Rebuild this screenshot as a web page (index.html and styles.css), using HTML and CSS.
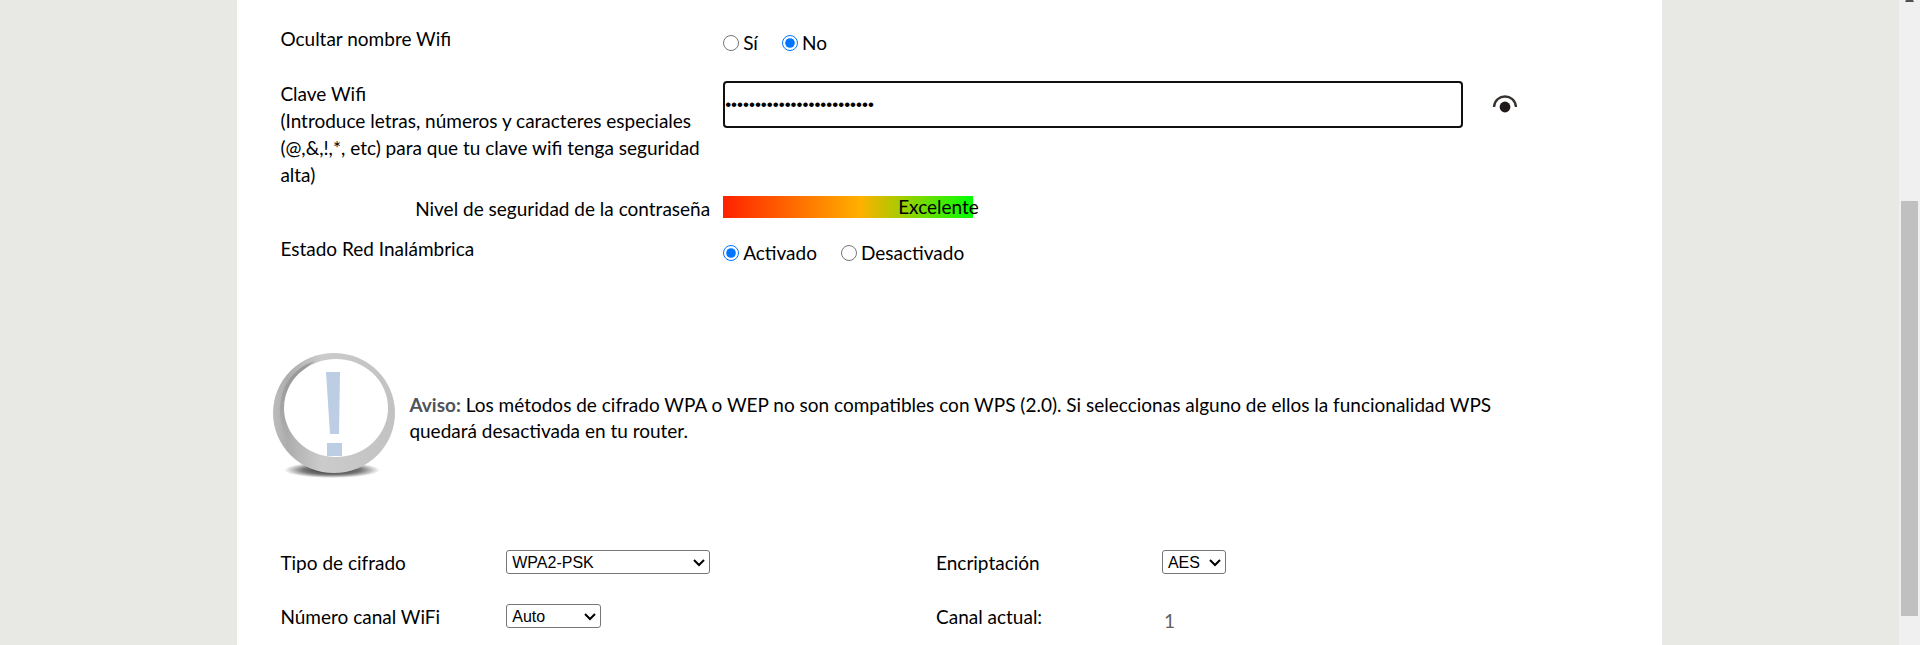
FILE: index.html
```
<!DOCTYPE html>
<html lang="es">
<head>
  <meta charset="utf-8">
  <title>Configuración WiFi</title>
  <link rel="stylesheet" href="styles.css">
</head>
<body>
  <main class="page">
    <form class="panel">
      <div class="row row-hide">
        <span class="label" id="hideLabel">Ocultar nombre Wifi</span>
        <div class="radios" role="radiogroup" aria-labelledby="hideLabel">
          <label><input type="radio" name="hide" value="1">Sí</label>
          <label><input type="radio" name="hide" value="0" checked>No</label>
        </div>
      </div>

      <div class="row row-key">
        <label class="label" for="wifiKey">Clave Wifi<br>(Introduce letras, números y caracteres especiales (@,&amp;,!,*, etc) para que tu clave wifi tenga seguridad alta)</label>
        <input class="key" type="password" id="wifiKey" value="ClaveWifiSegura2024Router">
        <button class="eye" type="button" aria-label="Mostrar clave">
          <svg width="26" height="20" viewBox="0 0 26 20">
            <path d="M2 13C3 -1 23 -1 24 13" fill="none" stroke="#3a3230" stroke-width="2.4"/>
            <circle cx="13" cy="13" r="5.4" fill="#1f1a19"/>
          </svg>
        </button>
      </div>

      <div class="row row-level">
        <span class="label right">Nivel de seguridad de la contraseña</span>
        <div class="strength"><span>Excelente</span></div>
      </div>

      <div class="row row-state">
        <span class="label" id="stateLabel">Estado Red Inalámbrica</span>
        <div class="radios" role="radiogroup" aria-labelledby="stateLabel">
          <label><input type="radio" name="state" value="1" checked>Activado</label>
          <label><input type="radio" name="state" value="0">Desactivado</label>
        </div>
      </div>

      <div class="notice">
        <svg class="notice-icon" width="130" height="130" viewBox="0 0 130 130">
          <defs>
            <linearGradient id="ring" x1="0" y1="0" x2="1" y2="0">
              <stop offset="0" stop-color="#bcbcbc"/>
              <stop offset="0.12" stop-color="#adadad"/>
              <stop offset="0.4" stop-color="#cbcbcb"/>
              <stop offset="1" stop-color="#c2c2c2"/>
            </linearGradient>
            <linearGradient id="inner" x1="0" y1="0" x2="0" y2="1">
              <stop offset="0" stop-color="#808080"/>
              <stop offset="1" stop-color="#b5b5b5"/>
            </linearGradient>
            <radialGradient id="shadow">
              <stop offset="0" stop-color="#222"/>
              <stop offset="0.6" stop-color="#777"/>
              <stop offset="1" stop-color="#fff"/>
            </radialGradient>
          </defs>
          <ellipse cx="65" cy="119" rx="48" ry="8" fill="url(#shadow)"/>
          <ellipse cx="67" cy="62" rx="61" ry="60" fill="url(#ring)"/>
          <path d="M48 10C25 17 12 38 13 62C14 78 20 92 31 102C22 88 18 72 20 56C23 36 32 20 48 10Z" fill="url(#inner)" opacity="0.6"/>
          <ellipse cx="69" cy="57" rx="52" ry="49" fill="#fff"/>
          <path d="M59 21H73L72 83H63ZM60 92H75V105H60Z" fill="#bccde4"/>
        </svg>
        <p><strong>Aviso:</strong> Los métodos de cifrado WPA o WEP no son compatibles con WPS (2.0). Si seleccionas alguno de ellos la funcionalidad WPS quedará desactivada en tu router.</p>
      </div>

      <div class="options">
        <label for="cipher">Tipo de cifrado</label>
        <div class="select select-wide">
          <select id="cipher"><option>WPA2-PSK</option></select>
          <svg width="12" height="8" viewBox="0 0 12 8"><path d="M1 1l5 5 5-5"/></svg>
        </div>
        <label for="encryption">Encriptación</label>
        <div class="select select-small">
          <select id="encryption"><option>AES</option></select>
          <svg width="12" height="8" viewBox="0 0 12 8"><path d="M1 1l5 5 5-5"/></svg>
        </div>

        <label for="channel">Número canal WiFi</label>
        <div class="select select-medium">
          <select id="channel"><option>Auto</option></select>
          <svg width="12" height="8" viewBox="0 0 12 8"><path d="M1 1l5 5 5-5"/></svg>
        </div>
        <span>Canal actual:</span>
        <span class="current">1</span>
      </div>
    </form>
  </main>

  <div class="scrollbar">
    <svg class="scroll-up" width="9" height="2" viewBox="0 0 9 2"><path d="M1 0H8L9 2H0Z" fill="#505050"/></svg>
    <div class="thumb"></div>
  </div>
</body>
</html>
```
FILE: styles.css
```
* { box-sizing: border-box; }
body {
  display: flex;
  margin: 0;
  height: 100vh;
  overflow: hidden;
  background: #e8e9e5;
  color: #000;
  font-family: Lato, "Noto Sans", sans-serif;
  font-size: 19px;
  line-height: 27px;
}
.page {
  flex: 1;
  display: flex;
  justify-content: center;
}
.panel {
  width: 75%;
  padding: 25px 43px 0;
  background: #fff;
}

.row {
  display: grid;
  grid-template-columns: 443fr 740fr 156fr;
  align-items: start;
}
.row .label { padding-right: 13px; }
.row .right { text-align: right; }
.row-hide { height: 55px; }
.row-key { margin-bottom: 7px; }
.row-level { height: 40px; }

.radios { display: flex; gap: 24px; padding-top: 4px; }
.radios label { display: flex; align-items: center; gap: 4px; }
.radios input { width: 16px; height: 16px; margin: 0; accent-color: #0075ff; }

.key {
  height: 47px;
  margin-top: 1px;
  padding: 0;
  border: 2px solid #101010;
  border-radius: 4px;
  outline: none;
  font-family: "Liberation Sans", Arial, sans-serif;
  font-size: 17px;
}
.eye {
  justify-self: start;
  margin: 14px 0 0 29px;
  padding: 0;
  border: 0;
  background: none;
}
.eye svg { display: block; }

.strength {
  width: 250px;
  height: 22px;
  margin-top: 1px;
  padding-left: 175px;
  background: linear-gradient(to right, #ff2200, #ffb000 55%, #00ff00);
  line-height: 22px;
  white-space: nowrap;
}

.notice {
  display: flex;
  align-items: flex-start;
  gap: 12px;
  margin: 85px 100px 0 -13px;
}
.notice-icon { flex: none; }
.notice p { margin: 0; padding-top: 41px; line-height: 26px; }
.notice strong { color: #50535a; font-weight: bold; }

.options {
  display: grid;
  grid-template-columns: 226fr 430fr 226fr 457fr;
  row-gap: 27px;
  margin-top: 68px;
}
.select { position: relative; height: 24px; margin-top: 1px; }
.select select {
  display: block;
  width: 100%;
  height: 24px;
  padding: 0 5px;
  border: 1px solid #767676;
  border-radius: 3px;
  background: #fff;
  color: #000;
  appearance: none;
  font-family: "Liberation Sans", Arial, sans-serif;
  font-size: 16px;
}
.select svg {
  position: absolute;
  right: 5px;
  top: 9px;
  fill: none;
  stroke: #000;
  stroke-width: 2;
  pointer-events: none;
}
.select-wide { width: 204px; }
.select-medium { width: 95px; }
.select-small { width: 64px; }
.current { padding: 4px 0 0 2px; color: #606060; }

.scrollbar {
  display: flex;
  flex-direction: column;
  align-items: center;
  width: 21px;
  background: #f0f0f0;
}
.scroll-up { flex: none; }
.thumb {
  width: 17px;
  height: 415px;
  margin-top: 199px;
  background: #c0c0c0;
}
```
